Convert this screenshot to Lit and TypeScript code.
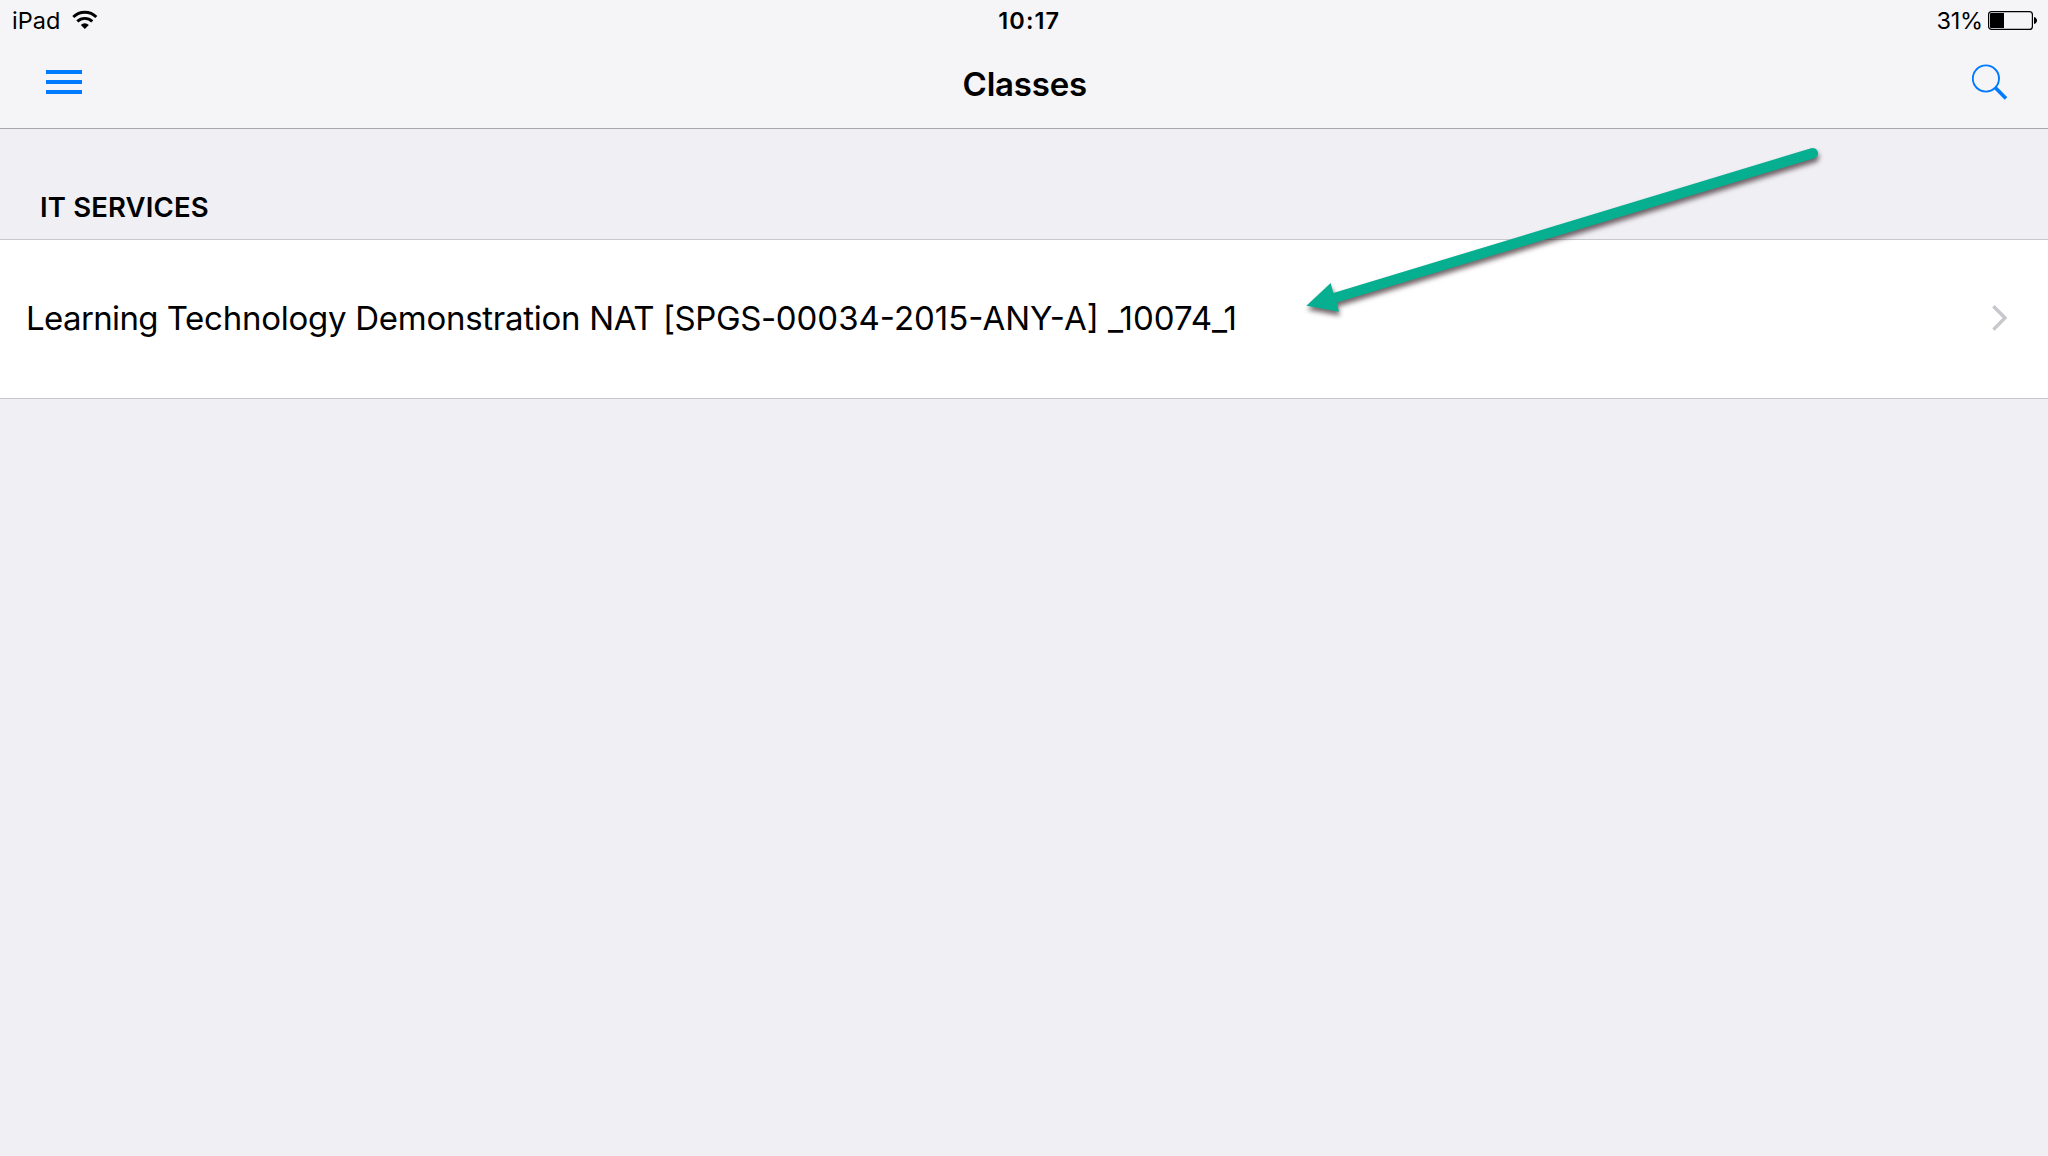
import { LitElement, html, css, svg } from "lit";
import { customElement, property } from "lit/decorators.js";

@customElement("status-bar")
class StatusBar extends LitElement {
  static styles = css`
    :host {
      display: grid;
      grid-template-columns: 1fr auto 1fr;
      align-items: center;
      height: 41px;
      padding: 0 10px 0 12px;
      font-size: 23.5px;
      line-height: 41px;
      color: #000;
    }
    .left,
    .right {
      display: flex;
      align-items: center;
    }
    .left {
      gap: 11.3px;
    }
    .right {
      justify-content: flex-end;
      letter-spacing: -0.2px;
      gap: 5px;
    }
    .time {
      font-weight: 600;
      letter-spacing: 1.1px;
      padding-left: 8.5px;
    }
    svg {
      display: block;
      flex: none;
    }
  `;
  render() {
    return html`
      <div class="left">
        <span>iPad</span>
        <svg width="26" height="41" viewBox="0 0 26 41">
          <g fill="none" stroke="#000" stroke-width="2.9">
            <path d="M1.3 17A16.2 16.2 0 0 1 24.3 17" />
            <path d="M5.3 21.4A10.8 10.8 0 0 1 20.3 21.4" />
          </g>
          <path d="M12.8 29L8.8 24.9A5.8 5.8 0 0 1 16.8 24.9Z" />
        </svg>
      </div>
      <div class="time">10:17</div>
      <div class="right">
        <span>31%</span>
        <svg width="50" height="41" viewBox="0 0 50 41">
          <rect x="0.6" y="11.6" width="43.8" height="17.8" rx="3" fill="none" stroke="#000" stroke-width="1.2" />
          <path d="M3 13h13v15H3a1 1 0 0 1-1-1V14a1 1 0 0 1 1-1Z" />
          <path d="M46 17C48.2 17.6 49 19 49 20.5S48.2 23.4 46 24Z" />
        </svg>
      </div>
    `;
  }
}

@customElement("nav-bar")
class NavBar extends LitElement {
  @property() heading = "";
  static styles = css`
    :host {
      display: grid;
      grid-template-columns: 1fr auto 1fr;
      align-items: center;
      height: 87px;
      padding: 0 40px 0 46px;
    }
    .title {
      margin: 0;
      padding-right: 4.5px;
      font-size: 33px;
      line-height: 87px;
      font-weight: 600;
      letter-spacing: -0.2px;
    }
    .icon {
      display: block;
      padding-bottom: 5px;
    }
    .end {
      justify-self: end;
    }
  `;
  render() {
    return html`
      <svg class="icon" width="36" height="24" viewBox="0 0 36 24" fill="#007aff">
        <path d="M0 0h36v4H0zM0 10h36v4H0zM0 20h36v4H0z" />
      </svg>
      <h1 class="title">${this.heading}</h1>
      <svg class="icon end" width="36" height="36" viewBox="0 0 36 36" fill="none" stroke="#007aff">
        <circle cx="13.9" cy="14.5" r="13.1" stroke-width="1.9" />
        <path d="M23.2 23.6L34 34.5" stroke-width="3.6" />
      </svg>
    `;
  }
}

@customElement("class-row")
class ClassRow extends LitElement {
  static styles = css`
    :host {
      display: flex;
      align-items: center;
      justify-content: space-between;
      box-sizing: border-box;
      height: 160px;
      padding: 0 41px 3px 26px;
      background: #fff;
      border-top: 1px solid #c8c7cc;
      border-bottom: 1px solid #c8c7cc;
    }
    .label {
      font-size: 33px;
      line-height: 40px;
      white-space: pre;
    }
    .tight {
      letter-spacing: -0.62px;
    }
    .loose {
      letter-spacing: -0.26px;
    }
    .mid {
      letter-spacing: -0.42px;
    }
    svg {
      display: block;
    }
  `;
  render() {
    return html`
      <div class="label"><span class="tight">Learning </span><span class="loose">Technology Demonstration</span><span class="mid"> NAT [SPGS-</span>00034-2015-ANY-A] _10074_1</div>
      <svg width="16" height="28" viewBox="0 0 16 28" fill="none" stroke="#c7c7cc" stroke-width="3.4">
        <path d="M2.4 2.2L13.9 13.9L2.4 25.6" />
      </svg>
    `;
  }
}

const pointer = svg`
  <path d="M1306.4 305.7L1330.7 283L1333.3 293L1811 148.2A5.1 5.1 0 0 1 1814.5 158.2L1336.8 302.5L1338.9 311.8Z" />
`;

@customElement("app-root")
class AppRoot extends LitElement {
  static styles = css`
    :host {
      display: block;
      position: relative;
      box-sizing: border-box;
      height: 1156px;
      overflow: hidden;
      background: #efeff4;
      color: #000;
      font-family: Inter, "Liberation Sans", sans-serif;
    }
    .header {
      background: #f5f5f7;
      border-bottom: 1px solid #a8a8ac;
    }
    .section {
      box-sizing: border-box;
      height: 110px;
      margin: 0;
      padding: 64px 0 0 40px;
      font-size: 27.5px;
      line-height: 28px;
      font-weight: 600;
      letter-spacing: 0.15px;
    }
    .pointer {
      position: absolute;
      top: 0;
      left: 0;
      fill: #07af91;
      filter: drop-shadow(1px 4px 2.5px rgba(40, 20, 25, 0.65));
      pointer-events: none;
    }
  `;
  render() {
    return html`
      <div class="header">
        <status-bar></status-bar>
        <nav-bar heading="Classes"></nav-bar>
      </div>
      <h2 class="section">IT SERVICES</h2>
      <class-row></class-row>
      <svg class="pointer" width="2048" height="400" viewBox="0 0 2048 400">${pointer}</svg>
    `;
  }
}
